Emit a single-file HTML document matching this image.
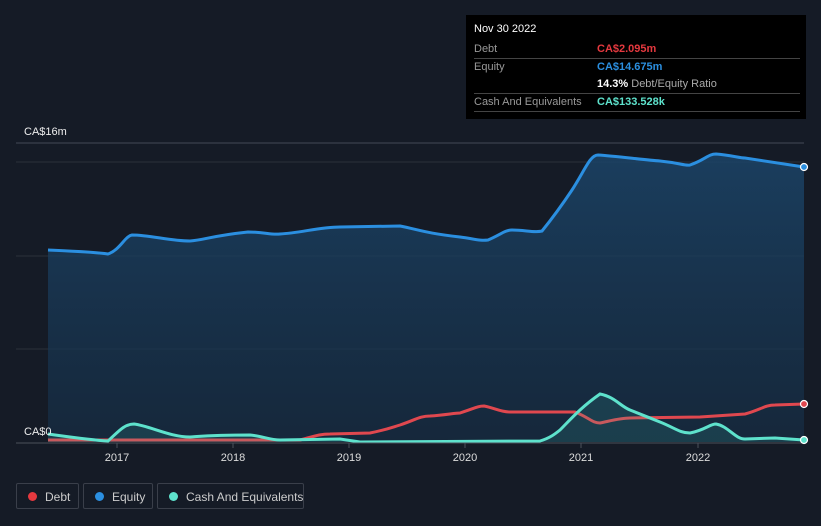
<!DOCTYPE html>
<html><head><meta charset="utf-8"><style>
html,body{margin:0;width:821px;height:526px;overflow:hidden}
body{background:#151b26;font-family:"Liberation Sans",sans-serif;position:relative}
.tt{position:absolute;left:466px;top:15px;width:340px;height:104px;background:#000;color:#fff;font-size:11px}
.row{position:absolute;left:8px;right:6px;height:18px;line-height:18px;border-bottom:1px solid #444}
.l{color:#999}
.v{position:absolute;left:123px;top:0;font-weight:bold}
.leg{position:absolute;top:483px;height:26px;border:1px solid #3a3f4a;border-radius:2px;color:#ccc;font-size:12px;line-height:26px;box-sizing:border-box;white-space:nowrap}
.dot{position:absolute;left:11px;top:8px;width:9px;height:9px;border-radius:50%}
</style></head><body>
<svg width="821" height="526" style="position:absolute;left:0;top:0">
<defs><linearGradient id="g" x1="0" y1="0" x2="0" y2="1"><stop offset="0" stop-color="#1b4468" stop-opacity=".85"/><stop offset="1" stop-color="#163049" stop-opacity=".6"/></linearGradient></defs>
<line x1="16" y1="143" x2="804" y2="143" stroke="#444a55"/>
<line x1="16" y1="162" x2="804" y2="162" stroke="#2a303b"/>
<line x1="16" y1="256" x2="804" y2="256" stroke="#2a303b"/>
<line x1="16" y1="349" x2="804" y2="349" stroke="#2a303b"/>
<path d="M48,250 C70,251 95,252 108,254 C120,250 125,236 132,235 C150,235 170,241 190,241 C205,240 210,236 248,232 C265,232 270,235 280,234 C300,233 320,227 340,227 L400,226 C420,230 425,233 460,237 C475,239 480,241 488,240 C500,235 505,230 512,230 C525,230 535,233 542,231 C555,215 562,205 572,190 C585,170 590,155 598,155 C615,156 645,160 660,161 C680,163 685,166 690,165 C705,160 708,154 716,154 C730,155 740,158 745,158 L804,167 L804,442 L48,442Z" fill="url(#g)"/>
<path d="M48,250 C70,251 95,252 108,254 C120,250 125,236 132,235 C150,235 170,241 190,241 C205,240 210,236 248,232 C265,232 270,235 280,234 C300,233 320,227 340,227 L400,226 C420,230 425,233 460,237 C475,239 480,241 488,240 C500,235 505,230 512,230 C525,230 535,233 542,231 C555,215 562,205 572,190 C585,170 590,155 598,155 C615,156 645,160 660,161 C680,163 685,166 690,165 C705,160 708,154 716,154 C730,155 740,158 745,158 L804,167" fill="none" stroke="#2b8fe0" stroke-width="3"/>
<path d="M48,440 L300,440 C315,436 320,434 330,434 L370,433 C385,430 390,428 400,425 C415,420 420,416 430,416 C445,415 455,413 460,413 C475,408 478,406 484,406 C495,408 500,412 510,412 L575,412 C590,418 592,423 600,423 C610,421 620,418 630,418 L700,417 L745,414 C760,410 765,405 775,405 L804,404" fill="none" stroke="#e0484f" stroke-width="3"/>
<path d="M48,434 C70,437 90,440 108,441 C118,432 124,424 134,424 C150,426 170,437 190,437 C205,436 215,435 250,435 C262,436 270,440 280,440 L340,439 L360,442 L540,441 C550,438 555,434 560,430 C570,420 580,408 600,394 C615,397 620,406 630,410 C645,416 650,418 660,422 C675,428 680,433 690,433 C705,430 710,424 716,424 C728,426 735,439 745,439 L775,438 L804,440 L804,442 L48,442Z" fill="#3fbfae" fill-opacity=".15"/>
<path d="M48,434 C70,437 90,440 108,441 C118,432 124,424 134,424 C150,426 170,437 190,437 C205,436 215,435 250,435 C262,436 270,440 280,440 L340,439 L360,442 L540,441 C550,438 555,434 560,430 C570,420 580,408 600,394 C615,397 620,406 630,410 C645,416 650,418 660,422 C675,428 680,433 690,433 C705,430 710,424 716,424 C728,426 735,439 745,439 L775,438 L804,440" fill="none" stroke="#5ee2cc" stroke-width="3"/>
<line x1="16" y1="443" x2="804" y2="443" stroke="#4a505b"/>
<g stroke="#4a505b"><line x1="117" y1="443" x2="117" y2="448"/><line x1="233" y1="443" x2="233" y2="448"/><line x1="349" y1="443" x2="349" y2="448"/><line x1="465" y1="443" x2="465" y2="448"/><line x1="581" y1="443" x2="581" y2="448"/><line x1="698" y1="443" x2="698" y2="448"/></g>
<circle cx="804" cy="167" r="3.5" fill="#2b8fe0" stroke="#fff" stroke-width="1.2"/>
<circle cx="804" cy="404" r="3.5" fill="#e0484f" stroke="#fff" stroke-width="1.2"/>
<circle cx="804" cy="440" r="3.5" fill="#5ee2cc" stroke="#fff" stroke-width="1.2"/>
<g fill="#ddd" font-size="11" font-family="Liberation Sans" text-anchor="middle"><text x="117" y="461">2017</text><text x="233" y="461">2018</text><text x="349" y="461">2019</text><text x="465" y="461">2020</text><text x="581" y="461">2021</text><text x="698" y="461">2022</text></g>
<text x="24" y="135" fill="#eee" font-size="11">CA$16m</text>
<text x="24" y="435" fill="#eee" font-size="11">CA$0</text>
</svg>
<div class="tt">
<div style="position:absolute;left:8px;top:8px">Nov 30 2022</div>
<div class="row" style="top:25px"><span class="l">Debt</span><span class="v" style="color:#e5393f">CA$2.095m</span></div>
<div class="row" style="top:43px;border:none"><span class="l">Equity</span><span class="v" style="color:#2b8fe0">CA$14.675m</span></div>
<div class="row" style="top:60px"><span class="v" style="color:#fff">14.3% <span style="color:#aaa;font-weight:normal">Debt/Equity Ratio</span></span></div>
<div class="row" style="top:78px"><span class="l">Cash And Equivalents</span><span class="v" style="color:#5ee2cc">CA$133.528k</span></div>
</div>
<div class="leg" style="left:16px;width:63px"><span class="dot" style="background:#e5393f"></span><span style="position:absolute;left:28px">Debt</span></div>
<div class="leg" style="left:83px;width:70px"><span class="dot" style="background:#2b8fe0"></span><span style="position:absolute;left:28px">Equity</span></div>
<div class="leg" style="left:157px;width:147px"><span class="dot" style="background:#5ee2cc"></span><span style="position:absolute;left:28px">Cash And Equivalents</span></div>
</body></html>
